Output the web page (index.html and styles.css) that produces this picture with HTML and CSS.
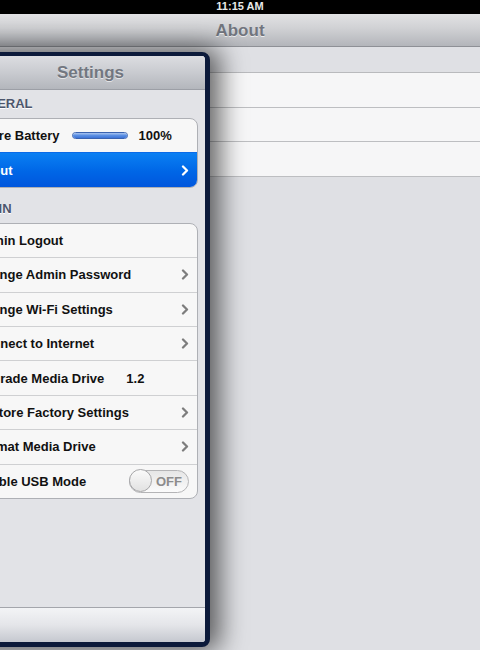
FILE: index.html
```html
<!DOCTYPE html>
<html>
<head>
<meta charset="utf-8">
<link rel="stylesheet" href="styles.css">
</head>
<body>
<div class="screen">
  <div class="status">11:15 AM</div>
  <div class="navbar"><span class="nav-title">About</span></div>
  <div class="main">
    <div class="detail-group">
      <div class="detail-row"></div>
      <div class="detail-row"></div>
      <div class="detail-row"></div>
    </div>
  </div>

  <div class="popover">
    <div class="pop-header">Settings</div>
    <div class="pop-body">
      <div class="section section-first">
        <div class="section-label">GENERAL</div>
        <div class="group">
          <div class="row">
            <span class="label">Spare Battery</span>
            <span class="battery"><span class="battery-fill" style="width:100%"></span></span>
            <span class="value">100%</span>
          </div>
          <div class="row selected">
            <span class="label">About</span>
            <svg class="chevron" width="8" height="11" viewBox="0 0 8 11"><polyline points="2,1.5 6,5.5 2,9.5" fill="none" stroke="#ffffff" stroke-width="2.3" stroke-linecap="round" stroke-linejoin="round"/></svg>
          </div>
        </div>
      </div>

      <div class="section">
        <div class="section-label">ADMIN</div>
        <div class="group">
          <div class="row"><span class="label">Admin Logout</span></div>
          <div class="row"><span class="label">Change Admin Password</span>
            <svg class="chevron" width="8" height="11" viewBox="0 0 8 11"><polyline points="2,1.5 6,5.5 2,9.5" fill="none" stroke="#7d7d7d" stroke-width="2.3" stroke-linecap="round" stroke-linejoin="round"/></svg></div>
          <div class="row"><span class="label">Change Wi-Fi Settings</span>
            <svg class="chevron" width="8" height="11" viewBox="0 0 8 11"><polyline points="2,1.5 6,5.5 2,9.5" fill="none" stroke="#7d7d7d" stroke-width="2.3" stroke-linecap="round" stroke-linejoin="round"/></svg></div>
          <div class="row"><span class="label">Connect to Internet</span>
            <svg class="chevron" width="8" height="11" viewBox="0 0 8 11"><polyline points="2,1.5 6,5.5 2,9.5" fill="none" stroke="#7d7d7d" stroke-width="2.3" stroke-linecap="round" stroke-linejoin="round"/></svg></div>
          <div class="row"><span class="label">Upgrade Media Drive</span><span class="version">1.2</span></div>
          <div class="row"><span class="label">Restore Factory Settings</span>
            <svg class="chevron" width="8" height="11" viewBox="0 0 8 11"><polyline points="2,1.5 6,5.5 2,9.5" fill="none" stroke="#7d7d7d" stroke-width="2.3" stroke-linecap="round" stroke-linejoin="round"/></svg></div>
          <div class="row"><span class="label">Format Media Drive</span>
            <svg class="chevron" width="8" height="11" viewBox="0 0 8 11"><polyline points="2,1.5 6,5.5 2,9.5" fill="none" stroke="#7d7d7d" stroke-width="2.3" stroke-linecap="round" stroke-linejoin="round"/></svg></div>
          <div class="row"><span class="label">Enable USB Mode</span>
            <span class="switch"><span class="knob"></span><span class="switch-text">OFF</span></span></div>
        </div>
      </div>
    </div>
    <div class="pop-toolbar"></div>
  </div>
</div>
</body>
</html>
```

FILE: styles.css
```css
* { box-sizing: border-box; }
html, body { margin: 0; padding: 0; }
body {
  width: 480px;
  height: 650px;
  overflow: hidden;
  font-family: "Liberation Sans", Arial, sans-serif;
  background: #dfe0e4;
}
.screen {
  position: relative;
  width: 480px;
  height: 650px;
  overflow: hidden;
  background: #dfe0e4;
}
.status {
  height: 14px;
  background: #000;
  color: #e8e8e8;
  font-size: 11px;
  font-weight: bold;
  line-height: 12px;
  text-align: center;
}
.navbar {
  height: 33px;
  background: linear-gradient(#e2e2e4, #d0d1d4 45%, #b3b5ba);
  border-bottom: 1px solid #8e9096;
  display: flex;
  align-items: center;
  justify-content: center;
  padding-top: 2px;
}
.nav-title {
  font-size: 17px;
  font-weight: bold;
  color: #71757e;
  text-shadow: 0 1px 0 rgba(255,255,255,.7);
}
.main {
  padding-top: 25px;
}
.detail-group {
  border-top: 1px solid #b9babd;
}
.detail-row {
  height: 34.5px;
  background: #f6f6f7;
  border-bottom: 1px solid #bdbec1;
}

.popover {
  position: absolute;
  left: -49px;
  top: 52px;
  width: 259px;
  height: 595px;
  border: 5px solid #0c1a3a;
  border-top-width: 4px;
  border-radius: 8px;
  background: #e2e3e7;
  box-shadow: 6px 0 26px 4px rgba(0,0,0,.6);
  display: flex;
  flex-direction: column;
  overflow: hidden;
}
.pop-header {
  height: 34px;
  flex: none;
  background: linear-gradient(#dcdde1, #c9cbd0 50%, #b3b6bc);
  border-bottom: 1px solid #9c9fa6;
  text-align: center;
  font-size: 17px;
  font-weight: bold;
  line-height: 34px;
  color: #727780;
  text-shadow: 0 1px 0 rgba(255,255,255,.6);
  padding-left: 20px;
}
.pop-body {
  flex: 1;
  padding: 0 7px 0 8px;
}
.section { padding-top: 13px; }
.section-first { padding-top: 6px; }
.section-label {
  font-size: 13px;
  font-weight: bold;
  color: #4c566c;
  line-height: 16px;
  padding-left: 5px;
  margin-bottom: 6px;
  text-shadow: 0 1px 0 #fff;
}
.group {
  background: #f7f7f7;
  border: 1px solid #aeb0b5;
  border-radius: 8px;
  overflow: hidden;
}
.row {
  height: 34.4px;
  display: flex;
  align-items: center;
  padding: 0 8px 0 10px;
  border-top: 1px solid #cfd0d2;
  font-size: 13px;
  font-weight: bold;
  color: #111;
}
.row:first-child { border-top: none; height: 33.4px; }
.label { flex: none; }
.row.selected {
  background: linear-gradient(#0a80f3, #0066e6 55%, #0056dd);
  color: #fff;
  border-top-color: #0a6be8;
}
.chevron { margin-left: auto; flex: none; }
.battery {
  margin-left: 12px;
  width: 56px;
  height: 7px;
  border-radius: 4px;
  background: #d0d4da;
  border: 1px solid #3a63b0;
  overflow: hidden;
  display: flex;
}
.battery-fill {
  display: block;
  height: 100%;
  background: linear-gradient(#a9c4ef, #5b8fe3 50%, #3d73d6);
}
.value { margin-left: 11px; }
.version { margin-left: 22px; }
.switch {
  margin-left: auto;
  width: 60px;
  height: 23px;
  border-radius: 12px;
  border: 1px solid #b4b4b6;
  background: linear-gradient(#e6e6e6, #fbfbfb);
  display: flex;
  align-items: center;
}
.knob {
  width: 23px;
  height: 23px;
  margin: -1px 0 0 -1px;
  border-radius: 50%;
  border: 1px solid #a6a6a8;
  background: linear-gradient(#fafafa, #e2e2e2);
  flex: none;
}
.switch-text {
  margin-left: 4px;
  font-size: 13px;
  color: #8c8c8c;
  font-weight: bold;
}
.pop-toolbar {
  height: 35px;
  flex: none;
  border-top: 1px solid #a4a6ac;
  background: linear-gradient(#f3f4f6, #e4e5e9 50%, #c5c8cf);
}
```
